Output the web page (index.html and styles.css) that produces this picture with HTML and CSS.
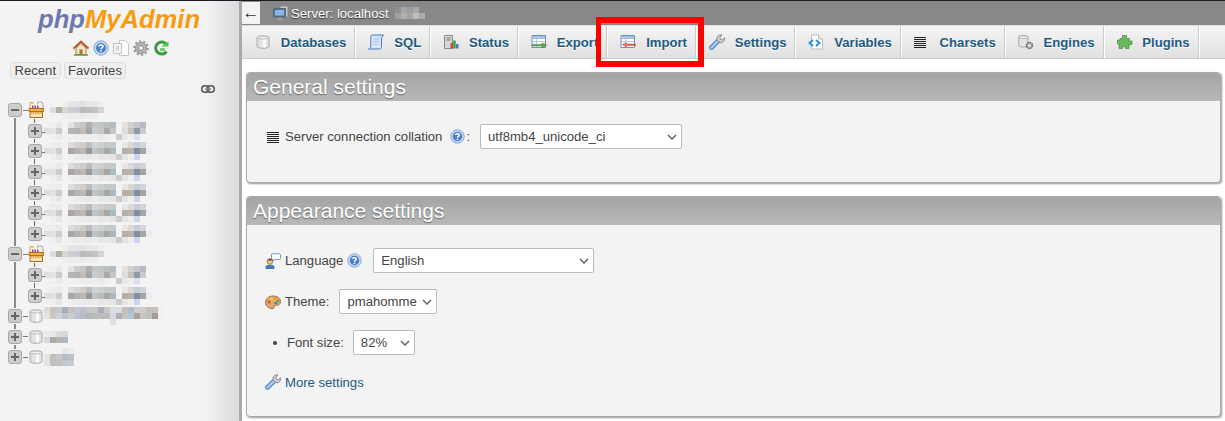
FILE: index.html
```html
<!DOCTYPE html>
<html lang="en">
<head>
<meta charset="utf-8">
<title>phpMyAdmin</title>
<link rel="stylesheet" href="styles.css">
</head>
<body>
<svg class="defs" aria-hidden="true">
  <symbol id="i-db" viewBox="0 0 16 16"><path d="M2 3.500C2 1.300 14 1.300 14 3.500V12.500C14 14.800 2 14.800 2 12.500Z" fill="#e4e4e4" stroke="#a9a9a9"/><path d="M2 3.500C2 5.500 14 5.500 14 3.500" fill="#f8f8f8" stroke="#b5b5b5"/><path d="M9.500 5.500V13.500" stroke="#fafafa" stroke-width="3"/><path d="M3 6V12.500" stroke="#cfcfcf" stroke-width="1.500"/></symbol>
  <symbol id="i-sql" viewBox="0 0 16 16"><path d="M4 1H15.500L13.500 4V12.500C13.500 14.500 12.500 15 11.500 15H.5C2.300 14.500 2.800 13.500 2.800 12V3C2.800 2 3.300 1 4 1Z" fill="#d6e5f7" stroke="#4a7fbd"/><path d="M5.500 5H11.500M5.500 7.500H11.500M5.500 10H10.500" stroke="#a8c4e4"/></symbol>
  <symbol id="i-status" viewBox="0 0 16 16"><path d="M1.500 1.500H9.500V14.500H1.500Z" fill="#d6d6d6" stroke="#8b8b8b"/><path d="M3.500 4H7.500M3.500 6H7.500" stroke="#777"/><path d="M7.500 9h2.500v5.500H7.500z" fill="#d9453a"/><path d="M10.200 6.500h2.500v8h-2.500z" fill="#3e9e46"/><path d="M13 10h2.500v4.500H13z" fill="#3d78c9"/></symbol>
  <symbol id="i-export" viewBox="0 0 16 16"><path d="M1 1.500H14.500V13.500H1Z" fill="#fff" stroke="#6d8fb8"/><path d="M1.500 2H14V5H1.500Z" fill="#a8c2e0"/><path d="M1.500 7.500H14M1.500 10H14M5.500 5V13" stroke="#b3c8df"/><path d="M1 10.700H11V9L15.800 11.300 11 13.700V12H1Z" fill="#67a84a" stroke="#3f7d2f" stroke-width=".5"/></symbol>
  <symbol id="i-import" viewBox="0 0 16 16"><path d="M1 1.500H14.500V13.500H1Z" fill="#fff" stroke="#6d8fb8"/><path d="M1.500 2H14V5H1.500Z" fill="#a8c2e0"/><path d="M1.500 7.500H14M1.500 10H14M5.500 5V13" stroke="#b3c8df"/><path d="M16 10.300H6.500V8.800L2.500 10.800 6.500 12.800V11.500H16Z" fill="#f0886e" stroke="#d8352a" stroke-width=".6"/></symbol>
  <symbol id="i-wrench" viewBox="0 0 16 16"><path d="M2.500 13.500L9 7" stroke="#4f82bd" stroke-width="4.600" stroke-linecap="round"/><path d="M2.500 13.500L9 7" stroke="#a4c6ea" stroke-width="2.600" stroke-linecap="round"/><path d="M7.800 5.500C7.500 2.500 10 .3 13 1L10.800 3.300 11.500 5.300 13.500 6 15.500 3.700C16.300 6.700 13.800 9.300 10.800 8.500Z" fill="#d0d0d0" stroke="#808080" stroke-width=".9"/></symbol>
  <symbol id="i-vars" viewBox="0 0 16 16"><path d="M3.500 1H10.500L14.500 5V15H3.500Z" fill="#fff" stroke="#bdbdbd"/><path d="M10.500 1V5H14.500" fill="#eee" stroke="#bdbdbd"/><path d="M5 6L1.500 9 5 12M8 6L11.500 9 8 12" fill="none" stroke="#2f8fe0" stroke-width="2"/></symbol>
  <symbol id="i-lines" viewBox="0 0 12 12"><path d="M0 1.500H12M0 3.500H12M0 5.500H12M0 7.500H12M0 9.500H12M0 11.500H12" stroke="#222"/></symbol>
  <symbol id="i-engines" viewBox="0 0 16 16"><path d="M.7 3C.7 .9 10 .9 10 3V11.500C10 13.500 .7 13.500 .7 11.500Z" fill="#e4e4e4" stroke="#a5a5a5"/><path d="M.7 3C.7 4.800 10 4.800 10 3" fill="#f7f7f7" stroke="#b0b0b0"/><circle cx="11.500" cy="11.500" r="3" fill="#bbb" stroke="#555" stroke-width="1.400" stroke-dasharray="1.500 .8"/><circle cx="11.500" cy="11.500" r="1.200" fill="#eee"/></symbol>
  <symbol id="i-plugin" viewBox="0 0 16 16"><path d="M5.500 1.500H9.500V4.500H12.500L11.500 7H15V10.500H12V14.500H8.500L8 12.500 6 12.500 5.500 14.500H2V10H.5V6H3V4.500H5.500Z" fill="#6cb563" stroke="#4b9444" stroke-width=".8"/></symbol>
  <symbol id="i-server" viewBox="0 0 16 16"><path d="M7 1H15V12H7Z" fill="#c6c9cc" stroke="#888"/><path d="M.5 3.500H12.500V12H.5Z" fill="#3f73b5" stroke="#666"/><path d="M2 5H11V10.500H2Z" fill="#8db6e4"/><path d="M5 12.500H9V14.500H11V15.500H3V14.500H5Z" fill="#999"/></symbol>
  <symbol id="i-home" viewBox="0 0 16 16"><path d="M3 8V14.500H13V8L8 3.500Z" fill="#f2e4c4" stroke="#9e8159"/><path d="M6.500 9.500H9.500V14.500H6.500Z" fill="#b0702e"/><path d="M.5 8.500L8 1.500 15.500 8.500" fill="none" stroke="#b7541f" stroke-width="1.800"/><path d="M1 15H15" stroke="#5c9c3c" stroke-width="1.500"/></symbol>
  <symbol id="i-help" viewBox="0 0 16 16"><circle cx="8" cy="8" r="7.200" fill="#c2d6f2" stroke="#86a8d8"/><circle cx="8" cy="8" r="5" fill="#4a80c8"/><path d="M6 6.500C6 4.500 10 4.500 10 6.500 10 8 8 7.800 8 9.200" fill="none" stroke="#fff" stroke-width="1.500"/><path d="M7.200 10.200h1.600v1.600H7.200z" fill="#fff"/></symbol>
  <symbol id="i-docs" viewBox="0 0 16 16"><path d="M6.500 .5H12L15.500 4V15.500H6.500Z" fill="#fff" stroke="#c8c8c8"/><path d="M.5 3.500H8.500V13.500H.5Z" fill="#f4f4f4" stroke="#c4c4c4"/><path d="M3 6H6V11H3Z" fill="#d8d8d8"/></symbol>
  <symbol id="i-gear" viewBox="0 0 16 16"><circle cx="8" cy="8" r="5.500" fill="#b6b6b6" stroke="#8c8c8c" stroke-width="1"/><circle cx="8" cy="8" r="6.700" fill="none" stroke="#9c9c9c" stroke-width="2.200" stroke-dasharray="2.200 2"/><circle cx="8" cy="8" r="2.500" fill="#ececec" stroke="#8c8c8c"/></symbol>
  <symbol id="i-reload" viewBox="0 0 16 16"><path d="M13.500 4.500A6 6 0 1 0 13.500 11.500" fill="none" stroke="#3f9a45" stroke-width="3"/><path d="M8 6.500H15.500V1.500Z" fill="#5db85c"/><path d="M7 8H12V11H7Z" fill="#7cc97a"/></symbol>
  <symbol id="i-link" viewBox="0 0 14 8"><rect class="ln" x=".8" y=".8" width="7" height="6.400" rx="3" fill="none" stroke="#555" stroke-width="1.500"/><rect class="ln" x="6.200" y=".8" width="7" height="6.400" rx="3" fill="none" stroke="#555" stroke-width="1.500"/><path d="M4 4H10" stroke="#888" stroke-width="1.500"/></symbol>
  <symbol id="i-crate" viewBox="0 0 16 18"><path d="M9.500 1H14L15 3V8H9.500Z" fill="#f0f0f0" stroke="#aaa"/><path d="M2 7V3C2 1.500 5 1 5 2.500V1.500H2" fill="none" stroke="#d9a23e" stroke-width="1"/><path d="M3 3.500H11V9H3Z" fill="#fff"/><path d="M4 9V4.500H5.500V9M6.500 9V4.500H8V9M9 9V4.500H10.500V9" fill="#7b3f98"/><path d="M1 7.500H15.500V10.500H1Z" fill="#f2b04a" stroke="#b36a12"/><path d="M2 10.500H14.500V16.500H2Z" fill="#fae3ae" stroke="#b36a12"/><path d="M2 12H14.500" stroke="#d18a2b"/></symbol>
  <symbol id="i-person" viewBox="0 0 16 16"><path d="M7 .8H14.500C15.500 .8 15.500 1.500 15.500 2V5.500C15.500 6.300 15 6.500 14.500 6.500H10L8 8V6.500C7 6.500 6.500 6.300 6.500 5.500V2C6.500 1 6.500 .8 7 .8Z" fill="#fff" stroke="#6f97c8"/><circle cx="5" cy="8.500" r="2.800" fill="#eac29a" stroke="#8a5a2b" stroke-width=".7"/><path d="M2.500 7.500C2.500 5.500 7.500 5.500 7.500 7.500Z" fill="#77431c"/><path d="M1 15.500V13.500C1 11.800 9 11.800 9 13.500V15.500Z" fill="#3e7ec4" stroke="#2a5a94" stroke-width=".7"/></symbol>
  <symbol id="i-palette" viewBox="0 0 16 16"><path d="M8 2C3.500 2 .5 5 .5 8.500 .5 13 5.500 15 8 14.500 10 14 8.500 12 10 11.500 12 11 15.500 11.500 15.500 7.500 15.500 4 12 2 8 2Z" fill="#dfa873" stroke="#a66c35"/><circle cx="4" cy="8" r="1.500" fill="#d8453a"/><circle cx="6.500" cy="5" r="1.400" fill="#f0d040"/><circle cx="10" cy="4.800" r="1.400" fill="#f09030"/><circle cx="12.800" cy="7.200" r="1.400" fill="#4caf50"/><circle cx="10.800" cy="9.300" r="1.300" fill="#3f7fd0"/></symbol>

  <symbol id="m-table-a" viewBox="0 0 17 3"><rect x="0" fill="#f0f0f0"/><rect x="1" fill="#eee"/><rect x="2" fill="#e8e8e8"/><rect x="4" fill="#e4e2e2"/><rect x="5" fill="#cfcdcc"/><rect x="6" fill="#c6c4c4"/><rect x="7" fill="#b2aeac"/><rect x="8" fill="#c4c8cc"/><rect x="9" fill="#c2c5c6"/><rect x="10" fill="#bcbebe"/><rect x="11" fill="#b2bcc0"/><rect x="13" fill="#e4e1e0"/><rect x="14" fill="#d4d0d0"/><rect x="15" fill="#c0c6d0"/><rect x="16" fill="#b8b8c4"/><rect x="0" y="1" fill="#e0e0e0"/><rect x="1" y="1" fill="#e4e4e4"/><rect x="2" y="1" fill="#ccc"/><rect x="4" y="1" fill="#b8b6b4"/><rect x="5" y="1" fill="#b5b2b0"/><rect x="6" y="1" fill="#c2bdbb"/><rect x="7" y="1" fill="#a8a4a4"/><rect x="8" y="1" fill="#c8ccd0"/><rect x="9" y="1" fill="#c6c8c8"/><rect x="10" y="1" fill="#aaa"/><rect x="11" y="1" fill="#c0c8cc"/><rect x="13" y="1" fill="#dcdcdc"/><rect x="14" y="1" fill="#c8c0b8"/><rect x="15" y="1" fill="#8e9cb0"/><rect x="16" y="1" fill="#c8ccd0"/><rect x="1" y="2" fill="#f0f0f0"/><rect x="2" y="2" fill="#ebebeb"/><rect x="4" y="2" fill="#f0f0f0"/><rect x="5" y="2" fill="#efefef"/><rect x="6" y="2" fill="#ededed"/><rect x="7" y="2" fill="#ececec"/><rect x="8" y="2" fill="#eee"/><rect x="9" y="2" fill="#eaeaea"/><rect x="10" y="2" fill="#eee"/><rect x="12" y="2" fill="#ccc"/><rect x="13" y="2" fill="#e8e8e8"/><rect x="14" y="2" fill="#eee"/><rect x="15" y="2" fill="#d8e0ec"/></symbol>
  <symbol id="m-table-b" viewBox="0 0 18 3"><rect x="0" fill="#f0f0f0"/><rect x="1" fill="#ededed"/><rect x="2" fill="#ebebeb"/><rect x="4" fill="#dedcdc"/><rect x="5" fill="#d4d2d2"/><rect x="6" fill="#cfcccc"/><rect x="7" fill="#c0bcbc"/><rect x="8" fill="#d0d4d8"/><rect x="9" fill="#ccd0d0"/><rect x="10" fill="#c8c8c8"/><rect x="11" fill="#c0cacf"/><rect x="13" fill="#e8e6e6"/><rect x="14" fill="#dcd8d8"/><rect x="15" fill="#c8ced8"/><rect x="16" fill="#d4d4d8"/><rect x="17" fill="#eff2f6"/><rect x="0" y="1" fill="#dedede"/><rect x="1" y="1" fill="#e2e2e2"/><rect x="2" y="1" fill="#cdcdcd"/><rect x="4" y="1" fill="#a9a5a5"/><rect x="5" y="1" fill="#b6b2b2"/><rect x="6" y="1" fill="#bcb8b6"/><rect x="7" y="1" fill="#9d9898"/><rect x="8" y="1" fill="#bcc4cc"/><rect x="9" y="1" fill="#b8bcbc"/><rect x="10" y="1" fill="#a8a8a0"/><rect x="11" y="1" fill="#a8bcc0"/><rect x="13" y="1" fill="#b4b0a8"/><rect x="14" y="1" fill="#b8b4a8"/><rect x="15" y="1" fill="#7e90a8"/><rect x="16" y="1" fill="#a8a4a0"/><rect x="17" y="1" fill="#e8eef4"/><rect x="1" y="2" fill="#eee"/><rect x="2" y="2" fill="#e6e6e6"/><rect x="4" y="2" fill="#efefef"/><rect x="5" y="2" fill="#ececec"/><rect x="6" y="2" fill="#eaeaea"/><rect x="7" y="2" fill="#e8e8e8"/><rect x="8" y="2" fill="#ececec"/><rect x="9" y="2" fill="#e6e6e6"/><rect x="10" y="2" fill="#e8e8e8"/><rect x="11" y="2" fill="#e4e4e4"/><rect x="12" y="2" fill="#ccc"/><rect x="13" y="2" fill="#e4e4e4"/><rect x="14" y="2" fill="#eee"/><rect x="15" y="2" fill="#ccd6e8"/></symbol>
  <symbol id="m-db-a" viewBox="0 0 10 3"><rect x="3" fill="#eee"/><rect x="4" fill="#e6e6e6"/><rect x="5" fill="#e4e4e8"/><rect x="6" fill="#e2e0e0"/><rect x="7" fill="#e8e6e6"/><rect x="8" fill="#e8e8e8"/><rect x="9" fill="#eee"/><rect x="1" y="1" fill="#ddd"/><rect x="2" y="1" fill="#b4b0a8"/><rect x="3" y="1" fill="#d8d8d0"/><rect x="4" y="1" fill="#ccd0d4"/><rect x="5" y="1" fill="#c8ccd4"/><rect x="6" y="1" fill="#bcb8bc"/><rect x="7" y="1" fill="#c0bcbc"/><rect x="8" y="1" fill="#c0c4c8"/><rect x="9" y="1" fill="#d4d4d4"/><rect x="3" y="2" fill="#efefef"/><rect x="4" y="2" fill="#ececec"/><rect x="5" y="2" fill="#eee"/><rect x="6" y="2" fill="#eaeaea"/><rect x="7" y="2" fill="#ededed"/><rect x="8" y="2" fill="#ededed"/></symbol>
  <symbol id="m-db-long" viewBox="0 0 21 3"><rect x="0" fill="#dcdcdc"/><rect x="1" fill="#c8c4bc"/><rect x="2" fill="#c8c8c8"/><rect x="3" fill="#a4b0c0"/><rect x="4" fill="#c4c0bc"/><rect x="5" fill="#c4c8cc"/><rect x="6" fill="#bcc0cc"/><rect x="7" fill="#c8c8c8"/><rect x="8" fill="#c8c8c8"/><rect x="9" fill="#b4a8c0"/><rect x="10" fill="#c8c8c4"/><rect x="11" fill="#dcdcec"/><rect x="12" fill="#dcdcdc"/><rect x="13" fill="#c8c0b4"/><rect x="14" fill="#b0bccc"/><rect x="15" fill="#d0ccc8"/><rect x="16" fill="#d0ccc8"/><rect x="17" fill="#c0c0c0"/><rect x="18" fill="#c8c0b8"/><rect x="19" fill="#f0f0f4"/><rect x="0" y="1" fill="#e4e4e4"/><rect x="1" y="1" fill="#d0c8bc"/><rect x="2" y="1" fill="#c8d4e0"/><rect x="3" y="1" fill="#bcc4cc"/><rect x="4" y="1" fill="#cccccc"/><rect x="5" y="1" fill="#c0c0d4"/><rect x="6" y="1" fill="#b8bcc4"/><rect x="7" y="1" fill="#b0b8c0"/><rect x="8" y="1" fill="#bcbcbc"/><rect x="9" y="1" fill="#c0bcbc"/><rect x="10" y="1" fill="#bcbcbc"/><rect x="11" y="1" fill="#d8d8e4"/><rect x="12" y="1" fill="#b0b0b0"/><rect x="13" y="1" fill="#c0c4c8"/><rect x="14" y="1" fill="#b0c8d8"/><rect x="15" y="1" fill="#a8a4a0"/><rect x="16" y="1" fill="#c4c4c4"/><rect x="17" y="1" fill="#c0c0c0"/><rect x="18" y="1" fill="#a89c94"/><rect x="19" y="1" fill="#f0f0f4"/><rect x="11" y="2" fill="#e0e0e0"/></symbol>
  <symbol id="m-db-short" viewBox="0 0 4 2"><rect x="0" fill="#ececec"/><rect x="1" fill="#e8e8e8"/><rect x="2" fill="#dcdcdc"/><rect x="3" fill="#d4d8e0"/><rect x="0" y="1" fill="#d8d8d8"/><rect x="1" y="1" fill="#a8aca8"/><rect x="2" y="1" fill="#b8b4ac"/><rect x="3" y="1" fill="#b0b8c4"/></symbol>
  <symbol id="m-db-mid" viewBox="0 0 5 3"><rect x="3" fill="#e8e8ec"/><rect x="4" fill="#ececec"/><rect x="0" y="1" fill="#e4e4e4"/><rect x="1" y="1" fill="#c0c0bc"/><rect x="2" y="1" fill="#c4c8cc"/><rect x="3" y="1" fill="#b4bcc4"/><rect x="4" y="1" fill="#bcc0c8"/><rect x="0" y="2" fill="#e4e4e4"/><rect x="1" y="2" fill="#bcc0c4"/><rect x="2" y="2" fill="#c8c0b8"/><rect x="3" y="2" fill="#bcc8d4"/><rect x="4" y="2" fill="#c8ccd0"/></symbol>
  <symbol id="m-host" viewBox="0 0 5 2"><rect x="0" fill="#8f8f92"/><rect x="1" fill="#a4a8ac"/><rect x="2" fill="#9c9ca4"/><rect x="3" fill="#a8a8a8"/><rect x="0" y="1" fill="#a0a0a0"/><rect x="1" y="1" fill="#b0aeb0"/><rect x="2" y="1" fill="#a8a4a0"/><rect x="3" y="1" fill="#c4bcb4"/><rect x="4" y="1" fill="#aaa"/></symbol>
</svg>

<aside class="sidebar">
  <div class="logo"><span class="logo-php">php</span><span class="logo-my">MyAdmin</span></div>
  <nav class="quick-icons">
    <svg class="ico-16"><use href="#i-home"/></svg>
    <svg class="ico-16"><use href="#i-help"/></svg>
    <svg class="ico-16"><use href="#i-docs"/></svg>
    <svg class="ico-16"><use href="#i-gear"/></svg>
    <svg class="ico-16"><use href="#i-reload"/></svg>
  </nav>
  <div class="recent-row">
    <button class="pill" type="button">Recent</button>
    <button class="pill" type="button">Favorites</button>
  </div>
  <div class="link-row"><svg class="ico-link"><use href="#i-link"/></svg></div>
  <ul class="tree">
    <li>
      <div class="node"><span class="exp exp-minus"></span><span class="branch"></span><svg class="ico-crate"><use href="#i-crate"/></svg><svg class="mos mos-db-a"><use href="#m-db-a"/></svg></div>
      <ul class="tables">
        <li class="node"><span class="exp exp-plus"></span><svg class="mos mos-table"><use href="#m-table-a"/></svg></li>
        <li class="node"><span class="exp exp-plus"></span><svg class="mos mos-table-b"><use href="#m-table-b"/></svg></li>
        <li class="node"><span class="exp exp-plus"></span><svg class="mos mos-table-b"><use href="#m-table-b"/></svg></li>
        <li class="node"><span class="exp exp-plus"></span><svg class="mos mos-table-b"><use href="#m-table-b"/></svg></li>
        <li class="node"><span class="exp exp-plus"></span><svg class="mos mos-table-b"><use href="#m-table-b"/></svg></li>
        <li class="node"><span class="exp exp-plus"></span><svg class="mos mos-table-b"><use href="#m-table-b"/></svg></li>
      </ul>
    </li>
    <li>
      <div class="node"><span class="exp exp-minus"></span><span class="branch"></span><svg class="ico-crate"><use href="#i-crate"/></svg><svg class="mos mos-db-a"><use href="#m-db-a"/></svg></div>
      <ul class="tables">
        <li class="node"><span class="exp exp-plus"></span><svg class="mos mos-table"><use href="#m-table-a"/></svg></li>
        <li class="node"><span class="exp exp-plus"></span><svg class="mos mos-table-b"><use href="#m-table-b"/></svg></li>
      </ul>
    </li>
    <li class="node"><span class="exp exp-plus"></span><span class="branch"></span><svg class="ico-tree-db"><use href="#i-db"/></svg><svg class="mos mos-db-long"><use href="#m-db-long"/></svg></li>
    <li class="node"><span class="exp exp-plus"></span><span class="branch"></span><svg class="ico-tree-db"><use href="#i-db"/></svg><svg class="mos mos-db-short"><use href="#m-db-short"/></svg></li>
    <li class="node"><span class="exp exp-plus"></span><span class="branch"></span><svg class="ico-tree-db"><use href="#i-db"/></svg><svg class="mos mos-db-mid"><use href="#m-db-mid"/></svg></li>
  </ul>
</aside>

<main class="main">
  <div class="serverbar">
    <span class="back">←</span>
    <svg class="ico-16 server-ico"><use href="#i-server"/></svg>
    <span class="server-label">Server: localhost</span>
    <svg class="mos-host"><use href="#m-host"/></svg>
  </div>
  <nav class="tabs">
    <a class="tab"><svg class="ico-16"><use href="#i-db"/></svg>Databases</a>
    <a class="tab"><svg class="ico-16"><use href="#i-sql"/></svg>SQL</a>
    <a class="tab"><svg class="ico-16"><use href="#i-status"/></svg>Status</a>
    <a class="tab"><svg class="ico-16"><use href="#i-export"/></svg>Export</a>
    <a class="tab tab-import"><svg class="ico-16"><use href="#i-import"/></svg>Import<span class="highlight"></span></a>
    <a class="tab"><svg class="ico-16"><use href="#i-wrench"/></svg>Settings</a>
    <a class="tab"><svg class="ico-16"><use href="#i-vars"/></svg>Variables</a>
    <a class="tab"><svg class="ico-lines-tab"><use href="#i-lines"/></svg>Charsets</a>
    <a class="tab"><svg class="ico-16"><use href="#i-engines"/></svg>Engines</a>
    <a class="tab"><svg class="ico-16"><use href="#i-plugin"/></svg>Plugins</a>
  </nav>
  <div class="content">
    <section class="panel panel-general">
      <h2 class="panel-title">General settings</h2>
      <div class="panel-body">
        <div class="row">
          <svg class="ico-lines"><use href="#i-lines"/></svg>
          <span class="label">Server connection collation</span>
          <svg class="ico-help ico-help-coll"><use href="#i-help"/></svg>
          <span class="colon">:</span>
          <select class="select select-collation"><option>utf8mb4_unicode_ci</option></select>
        </div>
      </div>
    </section>
    <section class="panel">
      <h2 class="panel-title">Appearance settings</h2>
      <div class="panel-body">
        <div class="row">
          <svg class="ico-16 row-ico"><use href="#i-person"/></svg>
          <span class="label">Language</span>
          <svg class="ico-help ico-help-lang"><use href="#i-help"/></svg>
          <select class="select select-language"><option>English</option></select>
        </div>
        <div class="row">
          <svg class="ico-16 row-ico"><use href="#i-palette"/></svg>
          <span class="label">Theme:</span>
          <select class="select select-theme"><option>pmahomme</option></select>
        </div>
        <div class="row">
          <span class="bullet"></span>
          <span class="label">Font size:</span>
          <select class="select select-font"><option>82%</option></select>
        </div>
        <div class="row row-more">
          <svg class="ico-16 row-ico"><use href="#i-wrench"/></svg>
          <a class="more">More settings</a>
        </div>
      </div>
    </section>
  </div>
</main>
</body>
</html>
```
FILE: styles.css
```css
* { box-sizing: border-box; }
html, body { margin: 0; height: 100%; }
body {
  display: flex;
  height: 421px;
  overflow: hidden;
  border-top: 1px solid #1c1c28;
  font: 13.12px "Liberation Sans", Arial, sans-serif;
  color: #444;
  background: #fff;
}
.defs { position: absolute; width: 0; height: 0; }
symbol rect:not(.ln) { width: 1px; height: 1px; }
ul { list-style: none; margin: 0; padding: 0; }
svg { display: block; flex: none; }
.ico-16 { width: 16px; height: 16px; }

/* sidebar */
.sidebar {
  width: 242px;
  flex: none;
  border-right: 3px solid #a9a9a9;
  background: linear-gradient(to right, #f3f3f3 0, #f3f3f3 205px, #d9dbdd 239px);
}
.logo {
  height: 32px;
  padding: 4px 0 0 38px;
  font: italic bold 25.6px/28px "Liberation Sans", Arial, sans-serif;
}
.logo-php { color: #6c78af; }
.logo-my { color: #f89c0e; }
.quick-icons {
  display: flex;
  gap: 4px;
  margin-top: 7px;
  padding-left: 73px;
  height: 16px;
}
.recent-row {
  display: flex;
  gap: 3px;
  margin-top: 6px;
  padding-left: 10px;
}
.pill {
  height: 17px;
  padding: 0 3.5px;
  border: 1px solid #ddd;
  border-radius: 4px;
  background: #efefef;
  color: #444;
  font: 13.12px/15px "Liberation Sans", Arial, sans-serif;
}
.link-row { display: flex; justify-content: flex-end; padding: 5px 24px 0 0; height: 20px; }
.ico-link { width: 14px; height: 8px; margin-top: 1px; }
.tree { position: relative; margin-top: 1px; }
.tree::before {
  content: "";
  position: absolute;
  left: 14px;
  top: 10px;
  bottom: 10px;
  width: 2px;
  background: #8a8a8a;
}
.tables { position: relative; }
.tables::before {
  content: "";
  position: absolute;
  left: 34px;
  top: -2px;
  bottom: 10px;
  width: 1px;
  background: #666;
}
.node {
  position: relative;
  display: flex;
  align-items: center;
  height: 20.6px;
  padding-left: 8px;
}
.exp {
  position: relative;
  z-index: 1;
  width: 14px;
  height: 14px;
  flex: none;
  border: 1px solid #a8a8a8;
  border-radius: 3px;
  background-color: #cdcdcd;
  background-repeat: no-repeat;
  box-shadow: 0 0 0 1px #f2f2f2;
}
.exp-minus {
  background-image: linear-gradient(#666, #666);
  background-size: 8px 2px;
  background-position: center;
}
.exp-plus {
  background-image: linear-gradient(#666, #666), linear-gradient(#666, #666);
  background-size: 8px 2px, 2px 8px;
  background-position: center, center;
}
.branch { width: 6px; height: 1px; background: #777; flex: none; }
.ico-crate { width: 16px; height: 18px; flex: none; }
.ico-tree-db { width: 16px; height: 16px; }
.mos { height: 18px; }
.mos-db-a { width: 60px; }
.mos-db-long { width: 126px; }
.mos-db-short { width: 24px; height: 12px; }
.mos-db-mid { width: 30px; height: 18px; }
.tables .node { padding-left: 28px; }
.mos-table, .mos-table-b { margin-left: 2px; }
.mos-table { width: 102px; }
.mos-table-b { width: 108px; }
.tables .exp::after {
  content: "";
  position: absolute;
  left: 13px;
  top: 7px;
  width: 3px;
  height: 1px;
  background: #777;
}

/* main */
.main { flex: 1; min-width: 0; display: flex; flex-direction: column; }
.serverbar {
  display: flex;
  flex: none;
  align-items: center;
  height: 24px;
  background: #888;
}
.back {
  width: 18px;
  height: 22px;
  background: #f3f3f3;
  color: #333;
  font: 17px/21px "Liberation Sans", sans-serif;
  text-align: center;
}
.server-ico { margin-left: 13px; }
.server-label {
  margin-left: 2px;
  color: #fff;
  text-shadow: 0 1px 1px #333;
}
.mos-host { width: 30px; height: 12px; margin-left: 6px; }
.tabs {
  display: flex;
  flex: none;
  height: 34px;
  padding-left: 0;
  border-top: 1px solid #ddd;
  border-bottom: 1px solid #ccc;
  background: linear-gradient(#f5f5f5, #e0e0e0);
}
.tab {
  position: relative;
  display: flex;
  align-items: center;
  gap: 9.8px;
  padding: 0 8px 0 13px;
  border-right: 1px solid #ccc;
  box-shadow: 1px 0 0 #fff;
  color: #235a81;
  font-weight: bold;
  text-shadow: 0 1px 0 #fff;
  white-space: nowrap;
}
.ico-lines-tab { width: 12px; height: 12px; margin-right: 4px; }
.highlight {
  position: absolute;
  left: -11.5px;
  top: -9px;
  width: 108px;
  height: 50px;
  border: 6px solid #f00;
  border-left-width: 5px;
}
.content { flex: 1; min-height: 0; padding: 13px 4px 0 4px; }
.panel {
  margin-bottom: 13px;
  border: 1px solid #aaa;
  border-radius: 4px;
  background: #f3f3f3;
  box-shadow: 1px 1px 2px #999;
}
.panel-title {
  margin: 0;
  height: 28px;
  padding: 0 6px;
  background: linear-gradient(#a4a4a4, #b8b8b8);
  color: #fff;
  font: normal 21px/28px "Liberation Sans", Arial, sans-serif;
  text-shadow: 0 1px 1px #666;
  border-radius: 3px 3px 0 0;
}
.panel-body {
  display: flex;
  flex-direction: column;
  gap: 16px;
  padding: 23px 18px;
}
.panel-general .panel-body { padding-bottom: 33px; }
.row { display: flex; align-items: center; height: 25px; }
.row-more { height: 22px; }
.ico-lines { width: 12px; height: 12px; margin: 0 6px 0 2px; }
.row-ico { margin-right: 4px; }
.label { color: #444; }
.ico-help { width: 15px; height: 15px; }
.ico-help-coll { margin-left: 8px; }
.ico-help-lang { margin-left: 4px; }
.colon { margin: 0 10px 0 1px; }
.select {
  appearance: none;
  height: 25px;
  padding: 0 7px;
  border: 1px solid #bbb;
  border-radius: 2px;
  background: #fff url("data:image/svg+xml,%3Csvg xmlns='http://www.w3.org/2000/svg' width='10' height='6'%3E%3Cpath d='M1 1l4 4 4-4' fill='none' stroke='%23666' stroke-width='1.500'/%3E%3C/svg%3E") no-repeat right 4px center;
  color: #444;
  font: 13.12px "Liberation Sans", Arial, sans-serif;
}
.select-collation { width: 202px; }
.select-language { width: 221px; margin-left: 11px; }
.select-theme { width: 98px; margin-left: 10px; }
.select-font { width: 62px; margin-left: 9px; }
.bullet {
  width: 4px;
  height: 4px;
  margin: 0 10px 0 8px;
  border-radius: 50%;
  background: #444;
}
.more { color: #235a81; }
```
